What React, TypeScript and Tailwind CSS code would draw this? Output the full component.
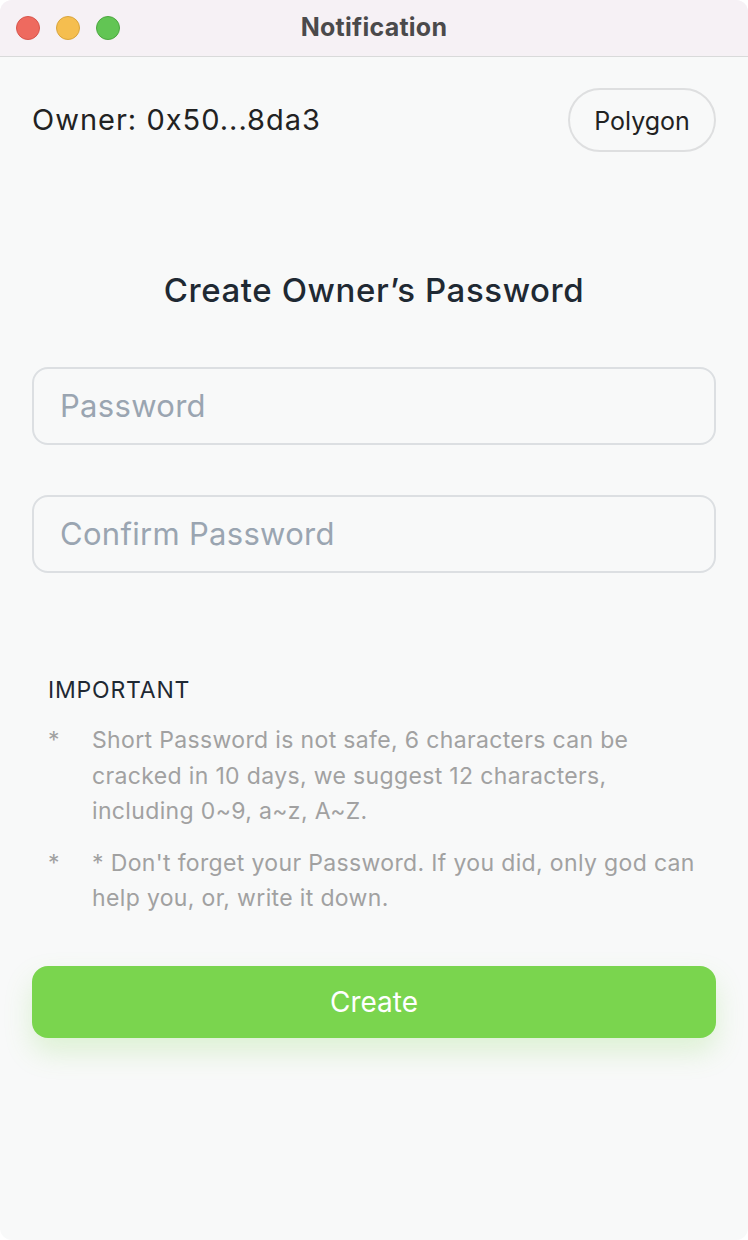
import { useState } from "react";

export default function App() {
  const [pwd, setPwd] = useState("");
  const [confirm, setConfirm] = useState("");

  return (
    <div className="w-[748px] h-[1240px] bg-white font-['Inter',sans-serif]">
      <div className="flex h-full flex-col overflow-hidden rounded-[12px] bg-[#f8f9f9]">
        {/* title bar */}
        <div className="relative flex h-[57px] shrink-0 items-center border-b border-[#d9dada] bg-[#f6f1f5] px-4">
          <div className="flex gap-4">
            <span className="h-6 w-6 rounded-full border border-[#d8554c] bg-[#ee6a5f]" />
            <span className="h-6 w-6 rounded-full border border-[#d9a53c] bg-[#f5be4f]" />
            <span className="h-6 w-6 rounded-full border border-[#4ca740] bg-[#62c554]" />
          </div>
          <div className="absolute inset-0 flex items-center justify-center text-[25px] font-bold tracking-[0.25px] text-[#4b4a4b]">
            Notification
          </div>
        </div>

        {/* body */}
        <div className="flex flex-1 flex-col px-8">
          <div className="mt-[31px] flex items-center justify-between">
            <span className="text-[29px] tracking-[1px] text-[#222]">Owner: 0x50...8da3</span>
            <button
              type="button"
              className="h-16 w-[148px] rounded-full border-2 border-[#dedfe0] pt-[3px] text-[25px] text-[#222]"
            >
              Polygon
            </button>
          </div>

          <h1 className="mt-[114px] text-center text-[33px] font-medium tracking-[0.6px] text-[#1f2933]">
            Create Owner’s Password
          </h1>

          <input
            type="password"
            value={pwd}
            onChange={(e) => setPwd(e.target.value)}
            placeholder="Password"
            className="mt-[51px] h-[78px] w-full rounded-[16px] border-2 border-[#dcdfe2] bg-transparent px-[26px] text-[31px] tracking-[0.3px] text-[#222] outline-none placeholder:text-[#9aa5b1]"
          />
          <input
            type="password"
            value={confirm}
            onChange={(e) => setConfirm(e.target.value)}
            placeholder="Confirm Password"
            className="mt-[50px] h-[78px] w-full rounded-[16px] border-2 border-[#dcdfe2] bg-transparent px-[26px] text-[31px] tracking-[0.3px] text-[#222] outline-none placeholder:text-[#9aa5b1]"
          />

          <div className="mt-[100px] px-4">
            <h3 className="text-[23px] tracking-[0.8px] text-[#1f2933]">IMPORTANT</h3>
            <ul className="mt-[16px] flex flex-col gap-[16px] text-[23px] leading-[35.5px] tracking-[0.35px] text-[#a1a1a1]">
              <li className="flex">
                <span className="w-[44px] shrink-0">*</span>
                <span className="max-w-[610px]">
                  Short Password is not safe, 6 characters can be cracked in 10 days, we suggest 12
                  characters, including 0~9, a~z, A~Z.
                </span>
              </li>
              <li className="flex">
                <span className="w-[44px] shrink-0">*</span>
                <span className="max-w-[610px]">
                  * Don't forget your Password. If you did, only god can help you, or, write it down.
                </span>
              </li>
            </ul>
          </div>

          <button
            type="button"
            className="mt-[49px] h-[72px] w-full rounded-[16px] bg-[#7ad54e] text-[28px] text-white shadow-[0_14px_28px_rgba(122,213,78,0.22)]"
          >
            Create
          </button>
        </div>
      </div>
    </div>
  );
}
